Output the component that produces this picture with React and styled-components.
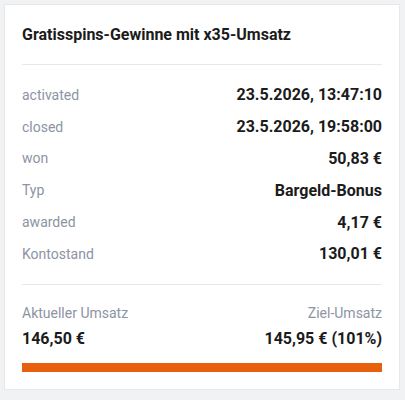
import React from "react";
import styled, { createGlobalStyle } from "styled-components";

const Global = createGlobalStyle`
  html, body { margin: 0; padding: 0; background: #f1f2f4; }
  body { font-family: Roboto, "Noto Sans", sans-serif; }
`;

const Page = styled.div`
  padding: 4px 5px 10px 4px;
`;

const Card = styled.div`
  background: #fff;
  border: 1px solid #e6e8ec;
  box-sizing: border-box;
  padding: 0 17px 17px;
`;

const Title = styled.h2`
  margin: 0;
  font-size: 16px;
  font-weight: 700;
  color: #1b1b1b;
  line-height: 20px;
  padding: 20px 0 19px;
  border-bottom: 1px solid #e6e8ef;
`;

const List = styled.div`
  display: flex;
  flex-direction: column;
  padding: 14px 0 14px;
  border-bottom: 1px solid #e6e8ef;
`;

const Row = styled.div`
  display: flex;
  justify-content: space-between;
  align-items: center;
  height: 31.8px;
`;

const Label = styled.span`
  font-size: 14px;
  line-height: 16px;
  color: #8c94a3;
`;

const Value = styled.span`
  font-size: 16px;
  line-height: 19px;
  font-weight: 700;
  color: #1b1b1b;
`;

const Summary = styled.div`
  display: grid;
  grid-template-columns: 1fr 1fr;
  row-gap: 8px;
  padding-top: 20px;
`;

const SumLabel = styled(Label)`
  text-align: ${(p) => (p.$right ? "right" : "left")};
`;

const SumValue = styled(Value)`
  text-align: ${(p) => (p.$right ? "right" : "left")};
`;

const Track = styled.div`
  margin-top: 15px;
  height: 9px;
  background: #eceef2;
`;

const Fill = styled.div`
  height: 100%;
  background: #e8600e;
`;

const rows = [
  ["activated", "23.5.2026, 13:47:10"],
  ["closed", "23.5.2026, 19:58:00"],
  ["won", "50,83 €"],
  ["Typ", "Bargeld-Bonus"],
  ["awarded", "4,17 €"],
  ["Kontostand", "130,01 €"],
];

export default function App() {
  const pct = 101;
  return (
    <>
      <Global />
      <Page>
        <Card>
          <Title>Gratisspins-Gewinne mit x35-Umsatz</Title>
          <List>
            {rows.map(([l, v]) => (
              <Row key={l}>
                <Label>{l}</Label>
                <Value>{v}</Value>
              </Row>
            ))}
          </List>
          <Summary>
            <SumLabel>Aktueller Umsatz</SumLabel>
            <SumLabel $right>Ziel-Umsatz</SumLabel>
            <SumValue>146,50 €</SumValue>
            <SumValue $right>145,95 € (101%)</SumValue>
          </Summary>
          <Track>
            <Fill style={{ width: `${Math.min(pct, 100)}%` }} />
          </Track>
        </Card>
      </Page>
    </>
  );
}
